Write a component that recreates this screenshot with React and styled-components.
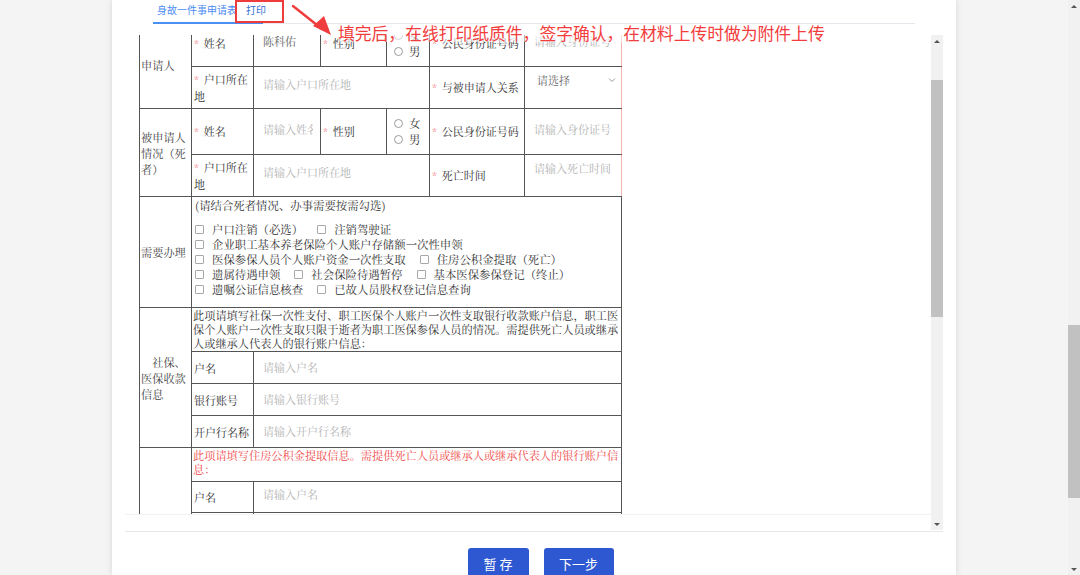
import React from 'react';
import styled, { createGlobalStyle } from 'styled-components';

const SERIF = `"Noto Serif CJK SC", "Noto Sans CJK SC", serif`;
const SANS = `"Noto Sans CJK SC", "Noto Sans", sans-serif`;

const GlobalStyle = createGlobalStyle`
  html, body {
    margin: 0;
    padding: 0;
    background: #f4f4f4;
    overflow: hidden;
  }
`;

const Screen = styled.div`
  display: flex;
  width: 1080px;
  height: 575px;
  background: #f4f4f4;
  overflow: hidden;
`;

const Stage = styled.div`
  flex: 1;
  display: flex;
  justify-content: center;
`;

const Panel = styled.div`
  position: relative;
  width: 844px;
  height: 575px;
  overflow: hidden;
  background: #fff;
  box-shadow: 0 0 6px rgba(0, 0, 0, 0.13);
  display: flex;
  flex-direction: column;
`;

const Header = styled.div`
  flex-shrink: 0;
  height: 35px;
  padding: 0 41px;
  box-sizing: border-box;
`;

const TabBar = styled.div`
  position: relative;
  height: 24px;
  box-sizing: border-box;
  border-bottom: 1px solid #e6e8ee;
  display: flex;
  align-items: center;
  gap: 9px;
  padding-left: 4px;
  font-family: ${SANS};
  font-size: 10px;
  color: #3f84ee;
`;

const Tab = styled.span`
  line-height: 18px;
  margin-top: -3px;
  color: ${(p) => (p.$dark ? '#2f6fd6' : '#4a8cf2')};
`;

const ActiveBar = styled.div`
  position: absolute;
  left: 0;
  bottom: -1px;
  width: 110px;
  height: 2px;
  background: #4c8ff2;
`;

const RedBox = styled.div`
  position: absolute;
  left: 123px;
  top: 0;
  width: 49px;
  height: 23px;
  box-sizing: border-box;
  border: 2px solid #ee3b3b;
`;

const ArrowMark = styled.svg`
  position: absolute;
  left: 178px;
  top: 2px;
`;

const Note = styled.div`
  position: absolute;
  left: 226px;
  top: 24px;
  font-family: ${SANS};
  font-size: 16.8px;
  line-height: 18px;
  color: #f23d3d;
  white-space: nowrap;
  background: rgba(255, 255, 255, 0.55);
  z-index: 3;
`;

const Frame = styled.div`
  flex-shrink: 0;
  margin: 0 13px;
  height: 497px;
  box-sizing: border-box;
  border-bottom: 1px solid #e8e8e8;
  display: flex;
`;

const Viewport = styled.div`
  flex: 1;
  display: flex;
  flex-direction: column;
`;

const Clip = styled.div`
  height: 480px;
  box-sizing: border-box;
  overflow: hidden;
  padding-left: 14px;
  border-bottom: 1px solid #f3f3f3;
`;

const ScrollBar = styled.div`
  flex-shrink: 0;
  width: 12px;
  height: ${(p) => p.$h}px;
  background: #f1f1f1;
  display: flex;
  flex-direction: column;
`;

const ArrowBtn = styled.div`
  height: 12px;
  display: flex;
  align-items: center;
  justify-content: center;
  &::after {
    content: '';
    border-left: 3px solid transparent;
    border-right: 3px solid transparent;
    ${(p) => (p.$down ? 'border-top: 3px solid #555;' : 'border-bottom: 3px solid #555;')}
  }
`;

const Gap = styled.div`
  height: ${(p) => p.$h}px;
`;

const Thumb = styled.div`
  height: ${(p) => p.$h}px;
  background: #c1c1c1;
`;

const Fill = styled.div`
  flex: 1;
`;

const Table = styled.table`
  margin-top: -15px;
  width: 482px;
  table-layout: fixed;
  border-collapse: collapse;
  font-family: ${SERIF};
  font-size: 11px;
  color: #333;
`;

const Row = styled.tr`
  height: ${(p) => p.$h}px;
`;

const Cell = styled.td`
  border: 1px solid #555;
  ${(p) => p.$pink && 'border-right-color: #f5b5b5;'}
  padding: 0;
  vertical-align: middle;
  overflow: hidden;
`;

const Head = styled(Cell)`
  padding: ${(p) => (p.$top ? `${p.$top}px 1px 0` : '0 1px')};
  vertical-align: ${(p) => (p.$top ? 'top' : 'middle')};
  line-height: 16px;
  color: #444;
  font-size: 11.2px;
`;

const Label = styled(Cell)`
  padding: 0 2px;
  line-height: 16px;
`;

const Star = styled.span`
  color: #f27f7f;
  font-size: 10px;
  margin-right: 5px;
`;

const Field = styled(Cell)`
  vertical-align: top;
  padding: ${(p) => p.$top}px 4px 0 ${(p) => p.$left ?? 9}px;
  line-height: 14px;
  white-space: nowrap;
  color: ${(p) => (p.$value ? '#666' : '#b3b3b3')};
`;

const Cropped = styled.span`
  display: block;
  width: ${(p) => p.$w}px;
  overflow: hidden;
`;

const SelectBox = styled.div`
  display: flex;
  align-items: center;
  justify-content: space-between;
  padding-right: 1px;
`;

const Options = styled.div`
  display: flex;
  flex-direction: column;
  gap: 3px;
  padding-left: 7px;
`;

const Option = styled.span`
  display: inline-flex;
  align-items: center;
  gap: 6px;
  line-height: 13px;
  font-size: 11.4px;
`;

const Dot = styled.span`
  width: 7px;
  height: 7px;
  border: 1px solid #9a9a9a;
  border-radius: 50%;
`;

const Hint = styled.div`
  line-height: 14px;
  margin: -2px 0 10px;
`;

const Checks = styled(Cell)`
  padding: 0 0 8px 3px;
  font-size: 11.4px;
`;

const CheckLine = styled.div`
  display: flex;
  gap: 14px;
  line-height: 15px;
`;

const Check = styled.span`
  display: inline-flex;
  align-items: center;
  gap: 8px;
`;

const Box = styled.span`
  width: 7px;
  height: 7px;
  border: 1px solid #a8a8a8;
  border-radius: 1px;
`;

const Desc = styled(Cell)`
  vertical-align: top;
  padding: 0 1px;
  font-size: 11.2px;
  line-height: 14px;
  color: ${(p) => (p.$red ? '#f04a4a' : '#333')};
`;

const Footer = styled.div`
  flex-shrink: 0;
  display: flex;
  justify-content: center;
  gap: 15px;
  padding: 16px 0 0 13px;
`;

const Button = styled.button`
  width: ${(p) => p.$w}px;
  height: 31px;
  border: none;
  border-radius: 3px;
  background: #2e58d1;
  color: #fff;
  font-family: ${SANS};
  font-size: 13px;
  padding: 0;
`;

const Req = ({ children }) => (
  <>
    <Star>*</Star>
    {children}
  </>
);

const Chevron = () => (
  <svg width="8" height="6" viewBox="0 0 8 6">
    <polyline points="1,1.5 4,4.5 7,1.5" fill="none" stroke="#999" strokeWidth="1" />
  </svg>
);

const checkLines = [
  ['户口注销（必选）', '注销驾驶证'],
  ['企业职工基本养老保险个人账户存储额一次性申领'],
  ['医保参保人员个人账户资金一次性支取', '住房公积金提取（死亡）'],
  ['遗属待遇申领', '社会保险待遇暂停', '基本医保参保登记（终止）'],
  ['遗嘱公证信息核查', '已故人员股权登记信息查询'],
];

const PersonRows = ({ title, nameCell, lastLabel, lastCell, row2Top }) => (
  <>
    <Row $h={46}>
      <Head rowSpan={2}>{title}</Head>
      <Label><Req>姓名</Req></Label>
      {nameCell}
      <Label><Req>性别</Req></Label>
      <Cell>
        <Options>
          <Option><Dot />女</Option>
          <Option><Dot />男</Option>
        </Options>
      </Cell>
      <Label><Req>公民身份证号码</Req></Label>
      <Field $top={13} $pink>请输入身份证号</Field>
    </Row>
    <Row $h={42}>
      <Label><Req>户口所在地</Req></Label>
      <Field colSpan={3} $top={row2Top}>请输入户口所在地</Field>
      <Label><Req>{lastLabel}</Req></Label>
      {lastCell}
    </Row>
  </>
);

const BankRows = ({ h, top }) =>
  ['户名', '银行账号', '开户行名称'].map((name) => (
    <Row $h={h} key={name}>
      <Label>{name}</Label>
      <Field colSpan={5} $top={top}>请输入{name}</Field>
    </Row>
  ));

export default function App() {
  return (
    <Screen>
      <GlobalStyle />
      <Stage>
        <Panel>
          <Header>
            <TabBar>
              <Tab>身故一件事申请表</Tab>
              <Tab $dark>打印</Tab>
              <ActiveBar />
            </TabBar>
          </Header>

          <RedBox />
          <ArrowMark width="46" height="38" viewBox="0 0 46 38">
            <line x1="3" y1="4" x2="32" y2="27" stroke="#f03c3c" strokeWidth="2.4" strokeLinecap="round" />
            <polygon points="41,33 23,24 34,14" fill="#f03c3c" />
          </ArrowMark>
          <Note>填完后，在线打印纸质件，签字确认，在材料上传时做为附件上传</Note>

          <Frame>
            <Viewport>
              <Clip>
                <Table>
                  <colgroup>
                    <col style={{ width: 52 }} />
                    <col style={{ width: 62 }} />
                    <col style={{ width: 67 }} />
                    <col style={{ width: 66 }} />
                    <col style={{ width: 43 }} />
                    <col style={{ width: 95 }} />
                    <col style={{ width: 97 }} />
                  </colgroup>
                  <tbody>
                    <PersonRows
                      title="申请人"
                      nameCell={<Field $top={13} $value>陈科佑</Field>}
                      lastLabel="与被申请人关系"
                      row2Top={10}
                      lastCell={
                        <Field $top={6} $left={12} $value $pink>
                          <SelectBox>
                            <span>请选择</span>
                            <Chevron />
                          </SelectBox>
                        </Field>
                      }
                    />
                    <PersonRows
                      title="被申请人情况（死者）"
                      nameCell={
                        <Field $top={13}>
                          <Cropped $w={50}>请输入姓名</Cropped>
                        </Field>
                      }
                      lastLabel="死亡时间"
                      row2Top={10}
                      lastCell={<Field $top={6} $pink>请输入死亡时间</Field>}
                    />
                    <Row $h={111}>
                      <Head>需要办理</Head>
                      <Checks colSpan={6}>
                        <Hint>(请结合死者情况、办事需要按需勾选)</Hint>
                        {checkLines.map((line, i) => (
                          <CheckLine key={i}>
                            {line.map((t) => (
                              <Check key={t}><Box />{t}</Check>
                            ))}
                          </CheckLine>
                        ))}
                      </Checks>
                    </Row>
                    <Row $h={44}>
                      <Head rowSpan={4}>{'\u3000社保、医保收款信息'}</Head>
                      <Desc colSpan={6}>
                        此项请填写社保一次性支付、职工医保个人账户一次性支取银行收款账户信息，职工医保个人账户一次性支取只限于逝者为职工医保参保人员的情况。需提供死亡人员或继承人或继承人代表人的银行账户信息：
                      </Desc>
                    </Row>
                    <BankRows h={32} top={8} />
                    <Row $h={34}>
                      <Head rowSpan={4} $top={64}>住房公积金收款信息</Head>
                      <Desc colSpan={6} $red>
                        此项请填写住房公积金提取信息。需提供死亡人员或继承人或继承代表人的银行账户信息：
                      </Desc>
                    </Row>
                    <BankRows h={31} top={5} />
                  </tbody>
                </Table>
              </Clip>
            </Viewport>
            <ScrollBar $h={495}>
              <ArrowBtn />
              <Gap $h={33} />
              <Thumb $h={237} />
              <Fill />
              <ArrowBtn $down />
            </ScrollBar>
          </Frame>

          <Footer>
            <Button $w={61}>暂 存</Button>
            <Button $w={70}>下一步</Button>
          </Footer>
        </Panel>
      </Stage>
      <ScrollBar $h={575}>
        <ArrowBtn />
        <Gap $h={313} />
        <Thumb $h={173} />
        <Fill />
        <ArrowBtn $down />
      </ScrollBar>
    </Screen>
  );
}
